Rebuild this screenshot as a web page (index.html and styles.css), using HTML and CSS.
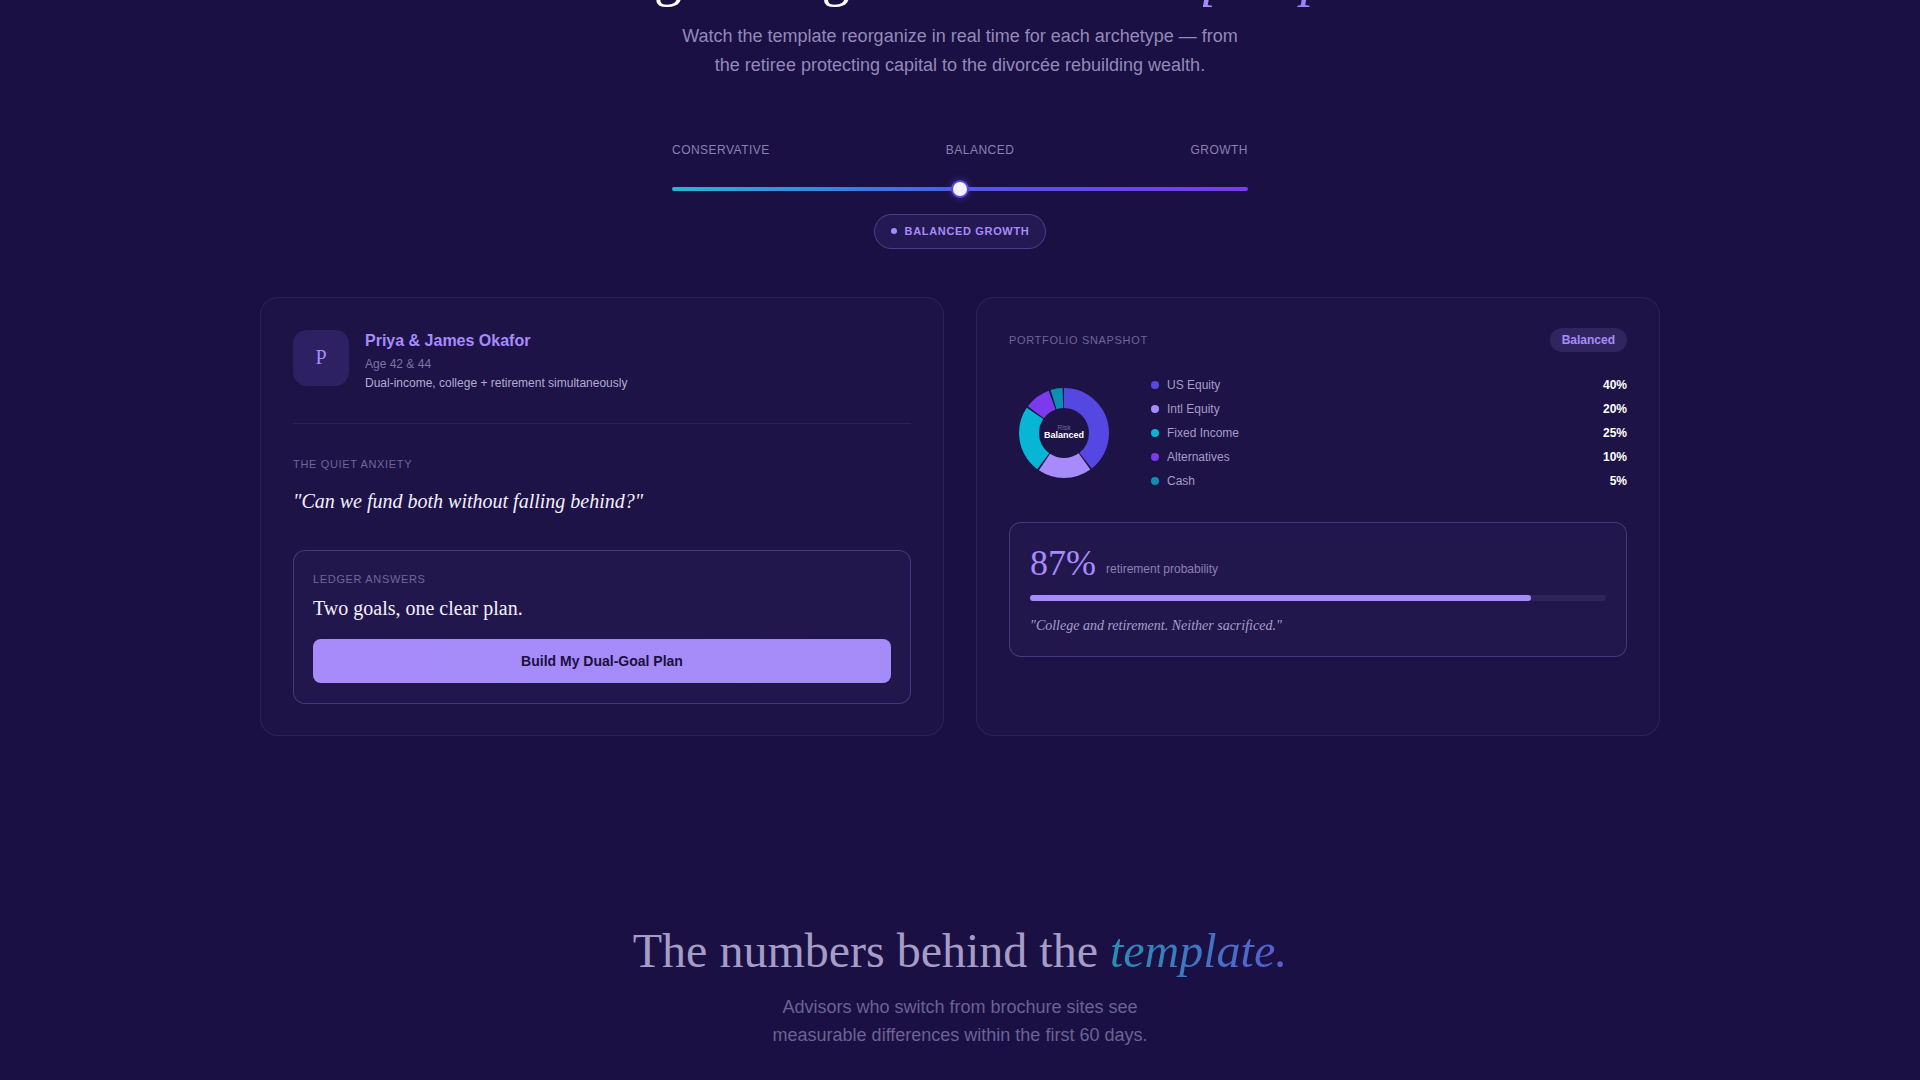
FILE: index.html
```html
<!DOCTYPE html>
<html lang="en">
<head>
  <meta charset="UTF-8">
  <meta name="viewport" content="width=device-width, initial-scale=1.0">
  <title>Ledger — Client Archetypes</title>
  <link rel="stylesheet" href="styles.css">
</head>
<body>
  <!-- Archetype fit section -->
  <section class="fit">
    <h2 class="fit-title">A design that grows with each <em>prospect.</em></h2>
    <p class="fit-sub">Watch the template reorganize in real time for each archetype — from the retiree protecting capital to the divorcée rebuilding wealth.</p>

    <div class="risk">
      <div class="risk-labels">
        <span>CONSERVATIVE</span>
        <span>BALANCED</span>
        <span>GROWTH</span>
      </div>
      <div class="risk-track">
        <span class="risk-thumb"></span>
      </div>
      <div class="risk-badge-row">
        <span class="risk-badge"><i class="risk-dot"></i>BALANCED GROWTH</span>
      </div>
    </div>

    <div class="profile-grid">
      <!-- Client profile -->
      <div class="card">
        <div class="client">
          <div class="avatar">P</div>
          <div class="client-info">
            <div class="client-name">Priya &amp; James Okafor</div>
            <div class="client-age">Age 42 &amp; 44</div>
            <div class="client-desc">Dual-income, college + retirement simultaneously</div>
          </div>
        </div>

        <div class="eyebrow anxiety-label">THE QUIET ANXIETY</div>
        <p class="anxiety-quote">"Can we fund both without falling behind?"</p>

        <div class="answer">
          <div class="eyebrow">LEDGER ANSWERS</div>
          <p class="answer-title">Two goals, one clear plan.</p>
          <button class="answer-btn">Build My Dual-Goal Plan</button>
        </div>
      </div>

      <!-- Portfolio snapshot -->
      <div class="card">
        <div class="snap-head">
          <span class="eyebrow">PORTFOLIO SNAPSHOT</span>
          <span class="snap-pill">Balanced</span>
        </div>

        <div class="snap-body">
          <div class="donut">
            <svg width="110" height="110" viewBox="0 0 110 110">
              <g transform="rotate(-90 55 55)" fill="none" stroke-width="20">
                <circle cx="55" cy="55" r="35" stroke="#5548e2" stroke-dasharray="86.5 133.4" stroke-dashoffset="0"/>
                <circle cx="55" cy="55" r="35" stroke="#a78bfa" stroke-dasharray="42.5 177.4" stroke-dashoffset="-87.96"/>
                <circle cx="55" cy="55" r="35" stroke="#06b6d4" stroke-dasharray="53.5 166.4" stroke-dashoffset="-131.95"/>
                <circle cx="55" cy="55" r="35" stroke="#7c3aed" stroke-dasharray="20.5 199.4" stroke-dashoffset="-186.93"/>
                <circle cx="55" cy="55" r="35" stroke="#0891b2" stroke-dasharray="9.5 210.4" stroke-dashoffset="-208.92"/>
              </g>
            </svg>
            <div class="donut-center">
              <span class="donut-kicker">Risk</span>
              <span class="donut-value">Balanced</span>
            </div>
          </div>

          <ul class="legend">
            <li><i class="swatch" style="background:#5548e2"></i><span>US Equity</span><b>40%</b></li>
            <li><i class="swatch" style="background:#a78bfa"></i><span>Intl Equity</span><b>20%</b></li>
            <li><i class="swatch" style="background:#06b6d4"></i><span>Fixed Income</span><b>25%</b></li>
            <li><i class="swatch" style="background:#7c3aed"></i><span>Alternatives</span><b>10%</b></li>
            <li><i class="swatch" style="background:#0891b2"></i><span>Cash</span><b>5%</b></li>
          </ul>
        </div>

        <div class="prob">
          <div class="prob-head">
            <span class="prob-value">87%</span>
            <span class="prob-label">retirement probability</span>
          </div>
          <div class="prob-bar"><div class="prob-fill" style="width:87%"></div></div>
          <p class="prob-quote">"College and retirement. Neither sacrificed."</p>
        </div>
      </div>
    </div>
  </section>

  <!-- Stats intro -->
  <section class="stats">
    <h2 class="stats-title">The numbers behind the <em>template.</em></h2>
    <p class="stats-sub">Advisors who switch from brochure sites see measurable differences within the first 60 days.</p>
  </section>
</body>
</html>
```

FILE: styles.css
```css
/* Base */
body {
  margin: 0;
  background: #1a1044;
  color: #fff;
  font-family: "Liberation Sans", Arial, sans-serif;
}
p {
  margin: 0;
}

/* Archetype fit section */
.fit {
  padding: 0 0 96px;
  text-align: center;
}
.fit-title {
  margin: -55px 0 0;
  font-family: "Liberation Serif", "Times New Roman", serif;
  font-weight: 400;
  font-size: 56px;
  line-height: 62px;
}
.fit-title em {
  background: linear-gradient(90deg, #a78bfa, #8b7cf6);
  -webkit-background-clip: text;
  background-clip: text;
  color: transparent;
}
.fit-sub {
  max-width: 580px;
  margin: 15px auto 0;
  font-size: 18px;
  line-height: 28.8px;
  color: #938ab8;
}

/* Risk slider */
.risk {
  width: 576px;
  margin: 63px auto 0;
}
.risk-labels {
  display: flex;
  justify-content: space-between;
  font-size: 12px;
  line-height: 14px;
  letter-spacing: 0.04em;
  color: #8a80b0;
}
.risk-track {
  position: relative;
  height: 4px;
  margin-top: 30px;
  border-radius: 2px;
  background: linear-gradient(90deg, #22b8d4, #4f5be0 50%, #7c3aed);
}
.risk-thumb {
  position: absolute;
  left: 50%;
  top: 50%;
  width: 14px;
  height: 14px;
  transform: translate(-50%, -50%);
  border-radius: 50%;
  background: #f4f2ff;
  box-shadow: 0 0 0 2px #5548e2, 0 0 10px rgba(124, 92, 255, 0.7);
}
.risk-badge-row {
  margin-top: 23px;
}
.risk-badge {
  display: inline-flex;
  align-items: center;
  gap: 8px;
  height: 35px;
  box-sizing: border-box;
  padding: 0 16px;
  border: 1px solid rgba(167, 139, 250, 0.3);
  border-radius: 999px;
  background: rgba(167, 139, 250, 0.08);
  color: #a78bfa;
  font-size: 11px;
  font-weight: 700;
  letter-spacing: 0.06em;
}
.risk-dot {
  width: 6px;
  height: 6px;
  border-radius: 50%;
  background: #a78bfa;
}

/* Cards */
.profile-grid {
  display: grid;
  grid-template-columns: 1fr 1fr;
  gap: 32px;
  max-width: 1400px;
  margin: 48px auto 0;
  text-align: left;
}
.card {
  padding: 32px 32px 31px;
  border: 1px solid rgba(255, 255, 255, 0.07);
  border-radius: 18px;
  background: rgba(255, 255, 255, 0.015);
}
.eyebrow {
  font-size: 11px;
  line-height: 16px;
  letter-spacing: 0.06em;
  color: #6f6699;
}

/* Client profile */
.client {
  display: flex;
  align-items: flex-start;
  gap: 16px;
  padding-bottom: 32px;
  border-bottom: 1px solid rgba(255, 255, 255, 0.07);
}
.avatar {
  display: flex;
  align-items: center;
  justify-content: center;
  width: 56px;
  height: 56px;
  flex-shrink: 0;
  border-radius: 14px;
  background: #2d2163;
  color: #a78bfa;
  font-family: "Liberation Serif", serif;
  font-size: 20px;
}
.client-name {
  font-size: 16px;
  line-height: 22px;
  font-weight: 700;
  color: #a78bfa;
}
.client-age {
  margin-top: 4px;
  font-size: 12px;
  line-height: 16px;
  color: #7d74a6;
}
.client-desc {
  margin-top: 3px;
  font-size: 12px;
  line-height: 16px;
  color: #b3abd3;
}
.anxiety-label {
  margin-top: 32px;
}
.anxiety-quote {
  margin-top: 14px;
  font-family: "Liberation Serif", serif;
  font-style: italic;
  font-size: 20px;
  line-height: 30px;
  color: #f3f0ff;
}
.answer {
  margin-top: 34px;
  padding: 20px 19px;
  border: 1px solid rgba(167, 139, 250, 0.28);
  border-radius: 12px;
  background: rgba(167, 139, 250, 0.04);
}
.answer-title {
  margin-top: 8px;
  font-family: "Liberation Serif", serif;
  font-size: 20px;
  line-height: 26px;
  color: #f3f0ff;
}
.answer-btn {
  display: block;
  width: 100%;
  height: 44px;
  margin-top: 18px;
  border: none;
  border-radius: 8px;
  background: linear-gradient(90deg, #a78bfa, #a48cf8);
  color: #1a1040;
  font-family: "Liberation Sans", Arial, sans-serif;
  font-size: 14px;
  font-weight: 700;
  cursor: pointer;
}

/* Portfolio snapshot */
.snap-head {
  display: flex;
  align-items: center;
  justify-content: space-between;
  margin-top: -2px;
}
.snap-pill {
  padding: 4px 12px;
  border-radius: 999px;
  background: rgba(167, 139, 250, 0.15);
  color: #a78bfa;
  font-size: 12px;
  line-height: 16px;
  font-weight: 700;
}
.snap-body {
  display: flex;
  align-items: center;
  gap: 32px;
  margin-top: 21px;
}
.donut {
  position: relative;
  width: 110px;
  height: 110px;
  flex-shrink: 0;
}
.donut svg {
  display: block;
}
.donut-center {
  position: absolute;
  inset: 0;
  display: flex;
  flex-direction: column;
  align-items: center;
  justify-content: center;
  line-height: 1.1;
}
.donut-kicker {
  font-size: 7px;
  color: #6f6699;
}
.donut-value {
  font-size: 9px;
  font-weight: 700;
  color: #fff;
}
.legend {
  flex: 1;
  margin: 0;
  padding: 0;
  list-style: none;
}
.legend li {
  display: flex;
  align-items: center;
  height: 24px;
  font-size: 12px;
  color: #a59cc8;
}
.swatch {
  width: 8px;
  height: 8px;
  margin-right: 8px;
  border-radius: 50%;
}
.legend b {
  margin-left: auto;
  color: #fff;
}

.prob {
  margin-top: 29px;
  padding: 20px;
  border: 1px solid rgba(167, 139, 250, 0.28);
  border-radius: 12px;
  background: rgba(167, 139, 250, 0.04);
}
.prob-head {
  display: flex;
  align-items: center;
  gap: 10px;
}
.prob-value {
  font-family: "Liberation Serif", serif;
  font-size: 36px;
  line-height: 40px;
  color: #a78bfa;
}
.prob-label {
  padding-top: 12px;
  font-size: 12px;
  color: #8a80b0;
}
.prob-bar {
  height: 6px;
  margin-top: 12px;
  border-radius: 3px;
  background: rgba(255, 255, 255, 0.06);
}
.prob-fill {
  height: 100%;
  border-radius: 3px;
  background: #a78bfa;
}
.prob-quote {
  margin-top: 15px;
  font-family: "Liberation Serif", serif;
  font-style: italic;
  font-size: 14px;
  line-height: 20px;
  color: #a79fc9;
}

/* Stats intro */
.stats {
  padding: 91px 0 96px;
  text-align: center;
}
.stats-title {
  margin: 0;
  font-family: "Liberation Serif", "Times New Roman", serif;
  font-weight: 400;
  font-size: 48px;
  line-height: 55px;
  color: #a59dc6;
}
.stats-title em {
  background: linear-gradient(90deg, #2a8db4, #5a5cd2);
  -webkit-background-clip: text;
  background-clip: text;
  color: transparent;
}
.stats-sub {
  max-width: 400px;
  margin: 15px auto 0;
  font-size: 18px;
  line-height: 28.8px;
  color: #6b6393;
}
```
